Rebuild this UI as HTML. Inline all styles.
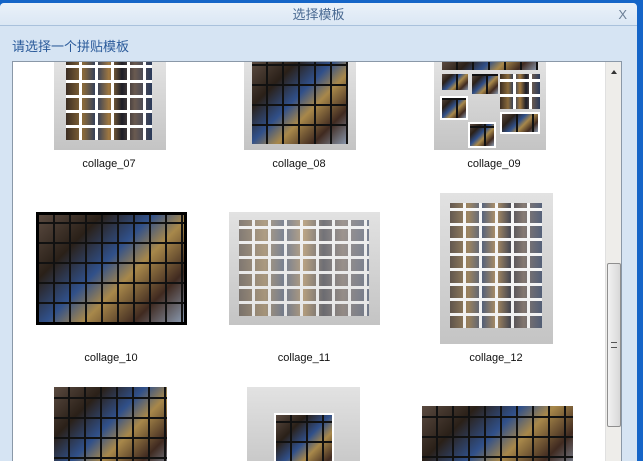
<!DOCTYPE html>
<html><head><meta charset="utf-8"><style>
*{margin:0;padding:0;box-sizing:border-box}
html,body{width:643px;height:461px;overflow:hidden}
body{background:#1565c8;font-family:"Liberation Sans","Noto Sans CJK SC",sans-serif;position:relative}
#dlg{position:absolute;left:0;top:3px;width:637px;height:458px;background:#d6e4f3;border-radius:4px 4px 0 0;overflow:hidden}
#title{position:absolute;left:0;top:0;width:637px;height:23px;background:linear-gradient(#eaf1f9,#dbe7f4);border-bottom:1px solid #a9c1dc;border-radius:4px 4px 0 0;text-align:center;font-size:13px;line-height:23px;color:#4a6a92}
#x{position:absolute;right:10px;top:0;font-size:13px;line-height:23px;color:#6c7f96}
#sub{position:absolute;left:12px;top:33px;font-size:13px;color:#2a5a9a}
#box{position:absolute;left:12px;top:58px;width:610px;height:410px;background:#fff;border:1px solid #8a98a8}
#sb{position:absolute;left:592px;top:0;width:16px;height:410px;background:#eeedea;border-left:1px solid #e0e0e0}
#thumb{position:absolute;left:1px;top:201px;width:14px;height:164px;background:linear-gradient(90deg,#f2f2f2,#d8d8d8);border:1px solid #8f8f8f;border-radius:2px}
.t{position:absolute;overflow:hidden}
.g{background:linear-gradient(#e2e2e2,#c4c4c4)}
.m{position:absolute;background:
repeating-linear-gradient(90deg,transparent 0 13px,#fff 13px 16px),
repeating-linear-gradient(0deg,transparent 0 12px,#fff 12px 15px),
linear-gradient(90deg,#3b2d22,#8a6a3a 20%,#2c3c5c 35%,#a07840 50%,#1e1e28 65%,#6a5a50 80%,#2a3a5a)}
.d{position:absolute;background:
repeating-linear-gradient(90deg,transparent 0 14px,#111 14px 16px),
repeating-linear-gradient(0deg,transparent 0 18px,#111 18px 20px),
linear-gradient(135deg,#5a4a40,#2a2018 25%,#30508a 45%,#a8884a 60%,#402a20 80%,#8a9ab0)}
.l{position:absolute;font-size:11px;color:#111;width:120px;text-align:center}
</style></head><body>
<div id="dlg">
<div id="title">选择模板<span id="x">X</span></div>
<div id="sub">请选择一个拼贴模板</div>
<div id="box">
<div class="t g" style="left:41px;top:0;width:112px;height:88px"><div class="m" style="left:12px;top:0;width:86px;height:78px"></div></div>
<div class="t g" style="left:231px;top:0;width:112px;height:88px"><div class="d" style="left:8px;top:0;width:96px;height:82px"></div></div>
<div class="t g" style="left:421px;top:0;width:112px;height:88px">
<div class="d" style="left:8px;top:0;width:96px;height:8px"></div>
<div class="d" style="left:8px;top:12px;width:26px;height:16px"></div>
<div class="d" style="left:38px;top:12px;width:26px;height:20px"></div>
<div class="m" style="left:66px;top:12px;width:40px;height:35px"></div>
<div class="d" style="left:6px;top:34px;width:28px;height:24px;border:2px solid #fff"></div>
<div class="d" style="left:66px;top:50px;width:40px;height:22px;border:2px solid #fff"></div>
<div class="d" style="left:34px;top:60px;width:28px;height:26px;border:2px solid #fff"></div>
</div>
<div class="l" style="left:36px;top:96px">collage_07</div>
<div class="l" style="left:226px;top:96px">collage_08</div>
<div class="l" style="left:421px;top:96px">collage_09</div>

<div class="t" style="left:23px;top:150px;width:151px;height:113px;background:#000"><div class="d" style="left:3px;top:3px;width:145px;height:107px"></div></div>
<div class="t g" style="left:216px;top:150px;width:151px;height:113px"><div class="m" style="left:10px;top:8px;width:130px;height:96px;opacity:.55"></div></div>
<div class="t g" style="left:427px;top:131px;width:113px;height:151px"><div class="m" style="left:10px;top:10px;width:92px;height:125px;opacity:.75"></div></div>
<div class="l" style="left:38px;top:290px">collage_10</div>
<div class="l" style="left:231px;top:290px">collage_11</div>
<div class="l" style="left:423px;top:290px">collage_12</div>

<div class="t" style="left:41px;top:325px;width:113px;height:90px"><div class="d" style="left:0;top:0;width:113px;height:90px"></div></div>
<div class="t g" style="left:234px;top:325px;width:113px;height:90px"><div class="d" style="left:27px;top:26px;width:60px;height:70px;border:2px solid #fff"></div></div>
<div class="t" style="left:409px;top:344px;width:151px;height:70px"><div class="d" style="left:0;top:0;width:151px;height:70px"></div></div>

<div id="sb"><div style="position:absolute;left:5px;top:8px;border:3px solid transparent;border-bottom:4px solid #333;border-top:0"></div><div id="thumb"><div style="position:absolute;left:3px;top:78px;width:6px;height:6px;border-top:1px solid #555;border-bottom:1px solid #555"></div></div></div>
</div>
</div>
</body></html>
